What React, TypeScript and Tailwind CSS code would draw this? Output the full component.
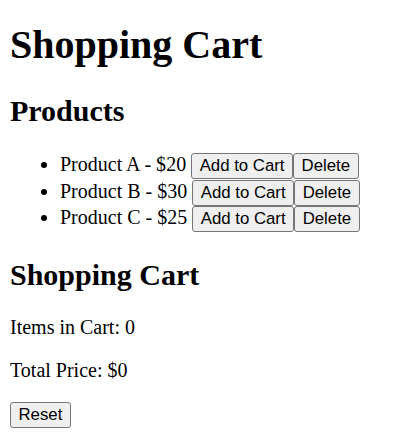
import { useState } from "react"

type Product = { id: number; name: string; price: number }

const initialProducts: Product[] = [
  { id: 1, name: "Product A", price: 20 },
  { id: 2, name: "Product B", price: 30 },
  { id: 3, name: "Product C", price: 25 },
]

const btn =
  "inline-block cursor-default rounded-[3px] border border-[#767676] bg-[#efefef] px-[7.5px] py-[2px] align-baseline font-['Liberation_Sans',Arial,sans-serif] text-[16.8px] leading-[normal] text-black hover:bg-[#e5e5e5]"

export default function App() {
  const [products, setProducts] = useState(initialProducts)
  const [cart, setCart] = useState<Product[]>([])

  const total = cart.reduce((sum, p) => sum + p.price, 0)

  return (
    <div className="min-h-[438px] bg-white px-[10px] pb-[10px] font-['Liberation_Serif','Times_New_Roman',serif] text-[20px] leading-[normal] text-black">
      <h1 className="mt-[20.5px] mb-[26.8px] text-[40px] font-bold">Shopping Cart</h1>

      <h2 className="my-[24.9px] text-[30px] font-bold">Products</h2>
      <ul className="my-[20px] list-disc pl-[50px]">
        {products.map((p) => (
          <li key={p.id} className="h-[26.5px]">
            {p.name} - ${p.price}{" "}
            <button className={btn} onClick={() => setCart([...cart, p])}>
              Add to Cart
            </button>
            <button className={btn} onClick={() => setProducts(products.filter((x) => x.id !== p.id))}>
              Delete
            </button>
          </li>
        ))}
      </ul>

      <h2 className="my-[24.9px] text-[30px] font-bold">Shopping Cart</h2>
      <p className="my-[20px]">Items in Cart: {cart.length}</p>
      <p className="my-[20px]">Total Price: ${total}</p>
      <button className={btn} onClick={() => setCart([])}>
        Reset
      </button>
    </div>
  )
}
